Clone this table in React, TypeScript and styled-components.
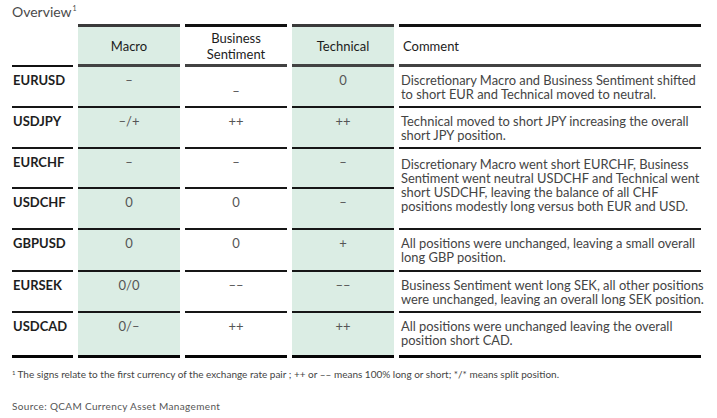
import React from "react";
import styled, { createGlobalStyle, css } from "styled-components";

const Global = createGlobalStyle`
  html, body { margin: 0; padding: 0; background: #ffffff; }
  body { font-family: Lato, "Open Sans", "Liberation Sans", sans-serif; color: #222; }
`;

const GREEN = "#dbede4";

const Page = styled.div`
  width: 717px;
  height: 418px;
  box-sizing: border-box;
  padding: 3px 0 0 12px;
`;

const Title = styled.div`
  font-size: 14px;
  line-height: 17px;
  color: #4a4a4a;
  height: 21px;
`;

const Sup = styled.span`
  font-size: 7px;
  line-height: 7px;
  position: relative;
  top: -6px;
  margin-left: 1px;
`;

const Table = styled.div`
  display: grid;
  grid-template-columns: 61px 102px 102px 102px 302px;
  grid-template-rows: 43px 41px 41px 40px 41px 42px 41px 45px;
  column-gap: 5px;
`;

type Kind = "label" | "value" | "comment";

const Cell = styled.div<{
  $kind: Kind;
  $green?: boolean;
  $header?: boolean;
  $last?: boolean;
  $span?: number;
  $middle?: boolean;
  $padTop?: number;
}>`
  box-sizing: border-box;
  font-size: 13px;
  line-height: 14px;
  background: ${(p) => (p.$green ? GREEN : "transparent")};
  border-bottom: 2px solid #161616;
  padding-top: ${(p) => p.$padTop ?? 6}px;
  ${(p) => p.$span && css`grid-row: span ${p.$span};`}
  ${(p) =>
    p.$kind === "label" &&
    css`
      font-weight: 700;
      color: #1e1e1e;
      padding-left: 1px;
    `}
  ${(p) =>
    p.$kind === "value" &&
    css`
      text-align: center;
      color: #555;
    `}
  ${(p) =>
    p.$kind === "comment" &&
    css`
      color: #444;
      padding-left: 2px;
      font-size: 12.9px;
      white-space: nowrap;
    `}
  ${(p) =>
    p.$middle &&
    css`
      display: flex;
      align-items: center;
      justify-content: center;
      padding-top: 8px;
    `}
  ${(p) =>
    p.$header &&
    css`
      display: flex;
      align-items: center;
      justify-content: ${p.$kind === "comment" ? "flex-start" : "center"};
      text-align: ${p.$kind === "comment" ? "left" : "center"};
      padding-top: 0;
      padding-left: ${p.$kind === "comment" ? "4px" : "0"};
      font-size: 13px;
      line-height: 16px;
      color: #1c1c1c;
      border-top: ${p.$kind === "label" ? "0" : `3px solid ${p.$green ? "#3a3a3a" : "#111"}`};
      border-bottom: ${p.$kind === "label" ? "2px solid #111" : "3px solid #424242"};
    `}
  ${(p) =>
    p.$last &&
    css`
      border-bottom: 3px solid #050505;
    `}
`;

const Line = styled.div``;

const Footnote = styled.div`
  margin-top: 10px;
  font-size: 10px;
  line-height: 12px;
  color: #444;
`;

const FootSup = styled.span`
  font-size: 6px;
  position: relative;
  top: -3px;
  margin-right: 2px;
`;

const Source = styled.div`
  margin-top: 18px;
  font-size: 10px;
  line-height: 12px;
  letter-spacing: 0.35px;
  color: #555;
`;

type Row = {
  pair: string;
  macro: string;
  business: string;
  technical: string;
  comment?: string[];
  span?: number;
  businessMiddle?: boolean;
  commentPad?: number;
};

const rows: Row[] = [
  {
    pair: "EURUSD",
    macro: "–",
    business: "–",
    technical: "0",
    comment: ["Discretionary Macro and Business Sentiment shifted", "to short EUR and Technical moved to neutral."],
    businessMiddle: true,
  },
  {
    pair: "USDJPY",
    macro: "–/+",
    business: "++",
    technical: "++",
    comment: ["Technical moved to short JPY increasing the overall", "short JPY position."],
  },
  {
    pair: "EURCHF",
    macro: "–",
    business: "–",
    technical: "–",
    comment: [
      "Discretionary Macro went short EURCHF, Business",
      "Sentiment went neutral USDCHF and Technical went",
      "short USDCHF, leaving the balance of all CHF",
      "positions modestly long versus both EUR and USD.",
    ],
    span: 2,
    commentPad: 8,
  },
  { pair: "USDCHF", macro: "0", business: "0", technical: "–" },
  {
    pair: "GBPUSD",
    macro: "0",
    business: "0",
    technical: "+",
    comment: ["All positions were unchanged, leaving a small overall", "long GBP position."],
  },
  {
    pair: "EURSEK",
    macro: "0/0",
    business: "––",
    technical: "––",
    comment: [
      "Business Sentiment went long SEK, all other positions",
      "were unchanged, leaving an overall long SEK position.",
    ],
  },
  {
    pair: "USDCAD",
    macro: "0/–",
    business: "++",
    technical: "++",
    comment: ["All positions were unchanged leaving the overall", "position short CAD."],
  },
];

export default function App() {
  return (
    <>
      <Global />
      <Page>
        <Title>
          Overview<Sup>1</Sup>
        </Title>
        <Table>
          <Cell $kind="label" $header />
          <Cell $kind="value" $header $green>
            Macro
          </Cell>
          <Cell $kind="value" $header>
            Business
            <br />
            Sentiment
          </Cell>
          <Cell $kind="value" $header $green>
            Technical
          </Cell>
          <Cell $kind="comment" $header>
            Comment
          </Cell>
          {rows.map((r, i) => {
            const last = i === rows.length - 1;
            return (
              <React.Fragment key={r.pair}>
                <Cell $kind="label" $last={last}>
                  {r.pair}
                </Cell>
                <Cell $kind="value" $green $last={last}>
                  {r.macro}
                </Cell>
                <Cell $kind="value" $last={last} $middle={r.businessMiddle}>
                  {r.business}
                </Cell>
                <Cell $kind="value" $green $last={last}>
                  {r.technical}
                </Cell>
                {r.comment !== undefined && (
                  <Cell $kind="comment" $last={last} $span={r.span} $padTop={r.commentPad}>
                    {r.comment.map((l) => (
                      <Line key={l}>{l}</Line>
                    ))}
                  </Cell>
                )}
              </React.Fragment>
            );
          })}
        </Table>
        <Footnote>
          <FootSup>1</FootSup>The signs relate to the first currency of the exchange rate pair ; ++ or –– means 100% long or
          short; */* means split position.
        </Footnote>
        <Source>Source: QCAM Currency Asset Management</Source>
      </Page>
    </>
  );
}
